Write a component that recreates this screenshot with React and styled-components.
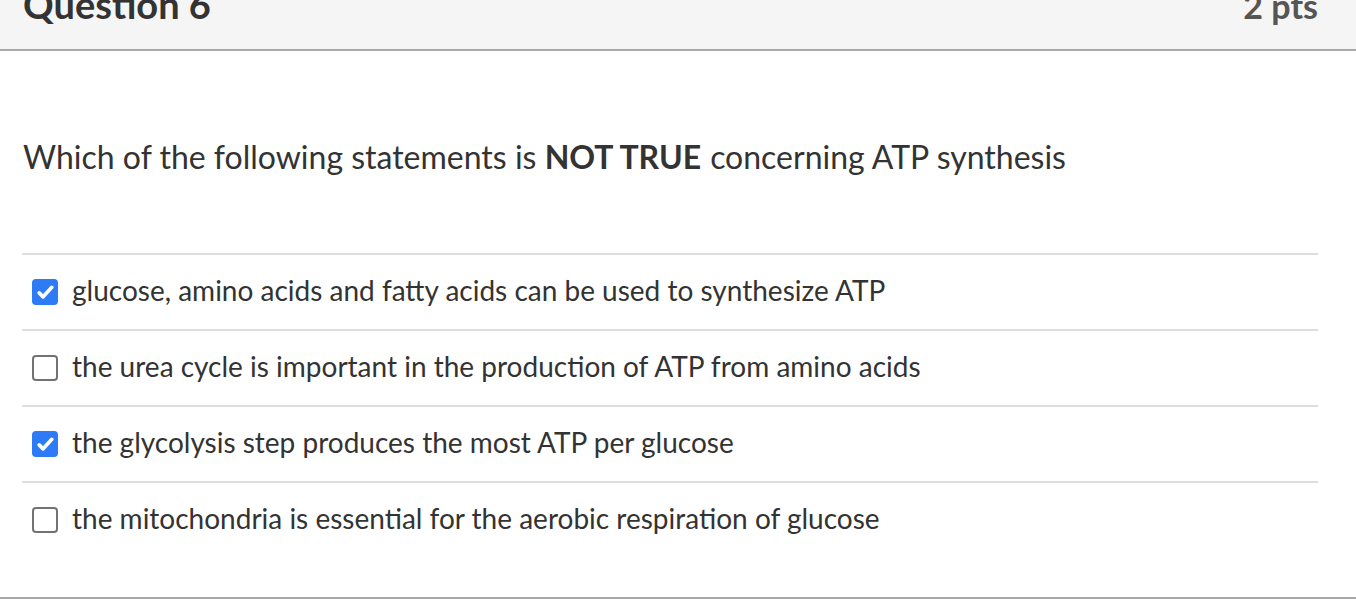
import React from "react"
import styled, { createGlobalStyle } from "styled-components"

const GlobalStyle = createGlobalStyle`
  html, body {
    margin: 0;
    padding: 0;
    background: #ffffff;
    font-family: Lato, "Open Sans", sans-serif;
    color: #2d3b45;
  }
`

const Page = styled.div`
  width: 1356px;
  height: 600px;
  overflow: hidden;
  display: flex;
  flex-direction: column;
`

const Header = styled.div`
  height: 49px;
  flex-shrink: 0;
  background: #f5f5f5;
  border-bottom: 2px solid #a9a9a9;
  display: flex;
  align-items: flex-end;
  justify-content: space-between;
  padding: 0 38px 0 23px;
  overflow: hidden;
`

const HeaderText = styled.div`
  font-size: ${(p) => p.size}px;
  font-weight: 700;
  line-height: 1;
  color: ${(p) => p.color};
  margin-bottom: 26px;
`

const Body = styled.div`
  flex: 1;
  padding: 0 38px 0 22px;
  display: flex;
  flex-direction: column;
  border-bottom: 2px solid #a9a9a9;
  margin-bottom: 1px;
`

const Prompt = styled.div`
  font-size: 32px;
  color: #333333;
  height: 202px;
  display: flex;
  align-items: center;
  padding-left: 1px;
  padding-top: 8px;
  box-sizing: border-box;

  b {
    font-weight: 700;
    margin-right: 9px;
  }
`

const Answers = styled.div`
  display: flex;
  flex-direction: column;
  border-top: 2px solid #dddddd;
`

const Row = styled.label`
  height: 74px;
  display: flex;
  align-items: center;
  gap: 14px;
  padding-left: 10px;
  border-bottom: ${(p) => (p.last ? "none" : "2px solid #dddddd")};
  font-size: 28px;
  color: #333333;
`

const AnswerText = styled.span`
  margin-bottom: 4px;
`

const Box = styled.span`
  width: 26px;
  height: 26px;
  box-sizing: border-box;
  border-radius: 4px;
  flex-shrink: 0;
  display: flex;
  align-items: center;
  justify-content: center;
  background: ${(p) => (p.checked ? "#2d7cf6" : "#ffffff")};
  border: ${(p) => (p.checked ? "none" : "2px solid #727272")};
`

const Check = () => (
  <svg width="19" height="19" viewBox="0 0 24 24">
    <path
      d="M4 12.5l5 5L20 5.5"
      fill="none"
      stroke="#ffffff"
      strokeWidth="4.6"
      strokeLinecap="round"
      strokeLinejoin="round"
    />
  </svg>
)

const answers = [
  { text: "glucose, amino acids and fatty acids can be used to synthesize ATP", checked: true },
  { text: "the urea cycle is important in the production of ATP from amino acids", checked: false },
  { text: "the glycolysis step produces the most ATP per glucose", checked: true },
  { text: "the mitochondria is essential for the aerobic respiration of glucose", checked: false },
]

const App = () => (
  <Page>
    <GlobalStyle />
    <Header>
      <HeaderText size={38} color="#333333">Question 6</HeaderText>
      <HeaderText size={34} color="#555555">2 pts</HeaderText>
    </Header>
    <Body>
      <Prompt>
        Which of the following statements is&nbsp;<b>NOT TRUE</b>concerning ATP synthesis
      </Prompt>
      <Answers>
        {answers.map((a, i) => (
          <Row key={i} last={i === answers.length - 1}>
            <Box checked={a.checked}>{a.checked && <Check />}</Box>
            <AnswerText>{a.text}</AnswerText>
          </Row>
        ))}
      </Answers>
    </Body>
  </Page>
)

export default App
